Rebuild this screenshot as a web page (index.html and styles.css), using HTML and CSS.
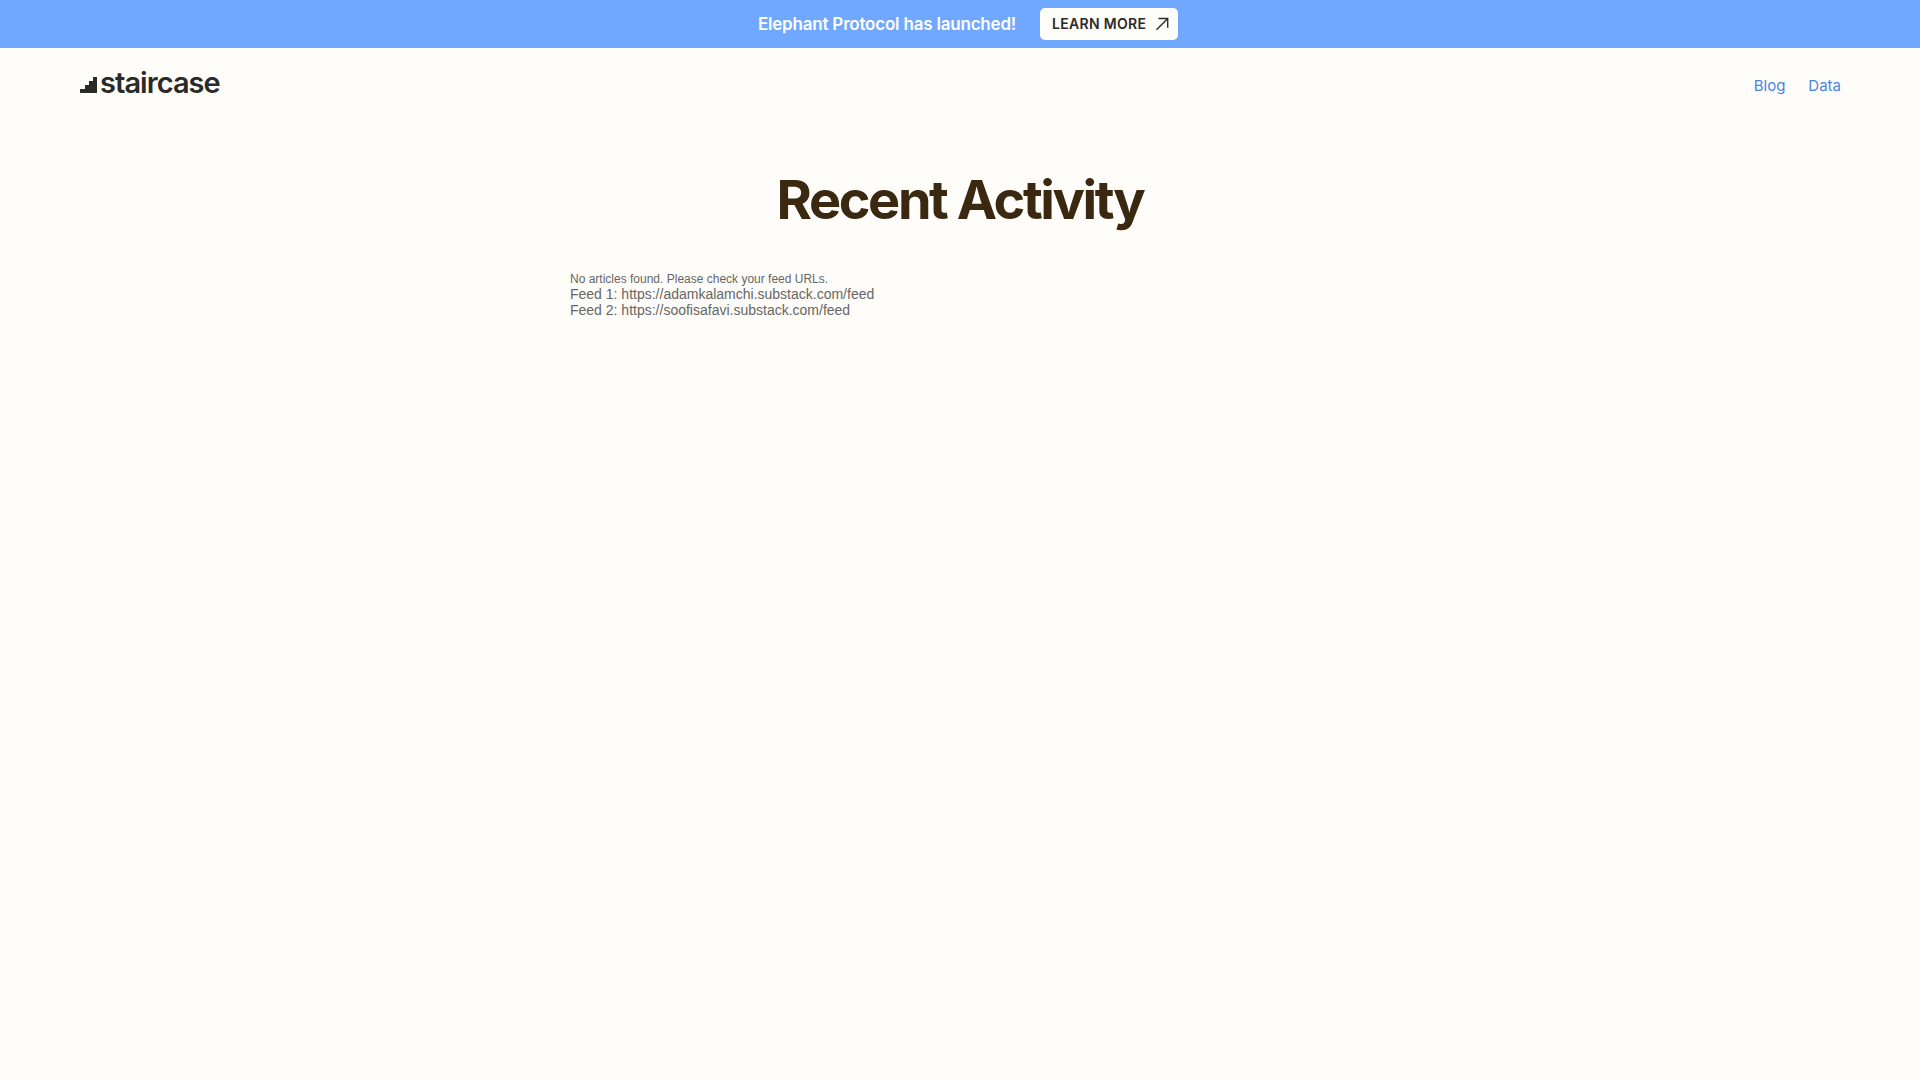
FILE: index.html
```html
<!DOCTYPE html>
<html lang="en">
<head>
<meta charset="utf-8">
<title>Recent Activity</title>
<link rel="stylesheet" href="styles.css">
</head>
<body>
<div class="banner">
  <span class="banner-text">Elephant Protocol has launched!</span>
  <a class="banner-btn" href="#"><span class="btn-label">LEARN MORE</span>
    <svg class="arrow" viewBox="0 0 14 14" width="14" height="14" fill="none" stroke="#2b2a26" stroke-width="1.4"><path d="M1.5 12.8 12.5 1.8M3.5 1.5H12.7V10.8"/></svg>
  </a>
</div>
<header class="nav">
  <a class="logo" href="#">
    <svg class="logo-mark" viewBox="0 0 17 16" width="17" height="16" fill="#2b2a26"><path d="M0 16V12H5V8H9V4H13V0H17V16Z"/></svg>
    <span class="logo-text">staircase</span>
  </a>
  <nav class="links">
    <a href="#">Blog</a>
    <a href="#">Data</a>
  </nav>
</header>
<main class="main">
  <h1 class="title">Recent Activity</h1>
  <div class="feed">
    <p class="note">No articles found. Please check your feed URLs.</p>
    <p class="line">Feed 1: https://adamkalamchi.substack.com/feed</p>
    <p class="line">Feed 2: https://soofisafavi.substack.com/feed</p>
  </div>
</main>
</body>
</html>
```
FILE: styles.css
```css
* { box-sizing: border-box; }
html, body { margin: 0; padding: 0; }
body {
  background: #fffdfa;
  min-height: 1080px;
  font-family: "Inter", "Liberation Sans", sans-serif;
}
a { text-decoration: none; }
.banner {
  height: 48px;
  padding-left: 16px;
  background: #70a8ff;
  display: flex;
  align-items: center;
  justify-content: center;
  gap: 24px;
}
.banner-text {
  color: #fffdfa;
  font-size: 17px;
  font-weight: 600;
  letter-spacing: -0.2px;
}
.banner-btn {
  height: 32px;
  width: 138px;
  padding: 0 9px 0 12px;
  background: #fffdfa;
  border-radius: 5px;
  color: #2b2a26;
  font-size: 14px;
  font-weight: 600;
  letter-spacing: 0.3px;
  display: flex;
  align-items: center;
  justify-content: space-between;
}
.btn-label { margin-top: -2px; }
.nav {
  display: flex;
  justify-content: space-between;
  align-items: flex-start;
  padding: 17px 79px 0 80px;
  height: 88px;
}
.logo {
  display: flex;
  align-items: flex-end;
  gap: 3px;
  color: #2b2a26;
}
.logo-mark { margin-bottom: 8px; }
.logo-text {
  font-size: 29px;
  line-height: 36px;
  font-weight: 600;
  letter-spacing: -0.95px;
}
.links {
  display: flex;
  gap: 23px;
  padding-top: 11px;
  font-size: 15px;
}
.links a { color: #4c84dc; }
.main {
  width: 780px;
  margin: 0 auto;
  padding-top: 29px;
}
.title {
  margin: 0;
  text-align: center;
  color: #3a2810;
  font-size: 54px;
  line-height: 70px;
  font-weight: 700;
  letter-spacing: -2.4px;
}
.feed {
  margin-top: 37px;
  font-family: "Liberation Sans", Arial, sans-serif;
  color: #666;
}
.feed p { margin: 0; }
.note { font-size: 12px; line-height: 14px; }
.line { font-size: 14px; line-height: 16px; }
```
